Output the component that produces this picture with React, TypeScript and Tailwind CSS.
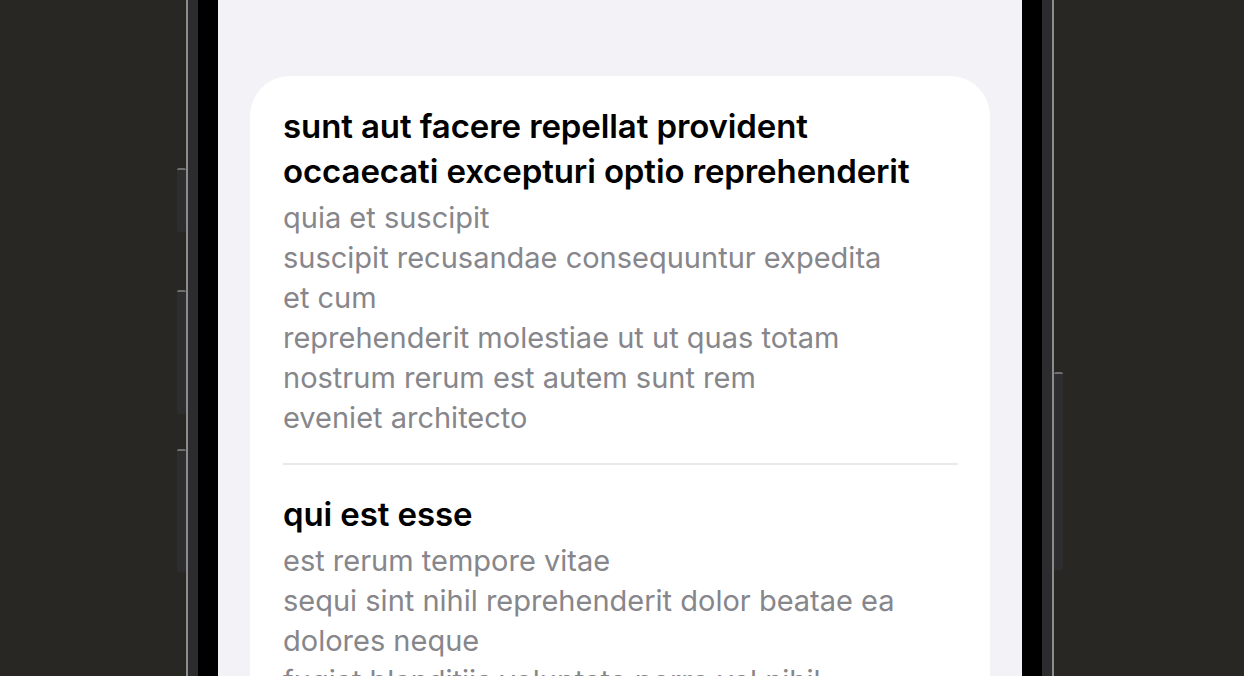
const posts = [
  {
    id: 1,
    title: ["sunt aut facere repellat provident", "occaecati excepturi optio reprehenderit"],
    body: [
      "quia et suscipit",
      "suscipit recusandae consequuntur expedita",
      "et cum",
      "reprehenderit molestiae ut ut quas totam",
      "nostrum rerum est autem sunt rem",
      "eveniet architecto",
    ],
  },
  {
    id: 2,
    title: ["qui est esse"],
    body: [
      "est rerum tempore vitae",
      "sequi sint nihil reprehenderit dolor beatae ea",
      "dolores neque",
      "fugiat blanditiis voluptate porro vel nihil",
      "molestiae ut reiciendis",
    ],
  },
]

function SideButton({ className }: { className: string }) {
  return <div className={"w-[9px] rounded-[2px] border-t-2 border-[#6f6f70] bg-[#2e2e30] " + className} />
}

export default function App() {
  return (
    <div className="flex h-[676px] w-full overflow-hidden bg-[#282723] pl-[177px] font-['Inter','Noto_Sans',sans-serif]">
      {/* left hardware buttons */}
      <div className="flex w-[9px] shrink-0 flex-col pt-[168px]">
        <SideButton className="h-[64px]" />
        <SideButton className="mt-[58px] h-[124px]" />
        <SideButton className="mt-[35px] h-[123px]" />
      </div>

      <div className="flex h-full w-[868px] shrink-0 border-x-2 border-[#8c8c8d]">
        <div className="flex h-full w-full border-x-[10px] border-[#2c2c2e]">
          <div className="flex h-full w-full bg-black px-[20px]">
            <main className="h-full w-full overflow-hidden bg-[#f2f2f7] px-[32px] pt-[76px]">
              <div className="rounded-[40px] bg-white pl-[33px] pr-[32px] pt-[28px]">
                {posts.map((post, i) => (
                  <div key={post.id}>
                    {i > 0 && <div className="mb-[27px] h-[2px] bg-[#e9e9eb]" />}
                    <div className={i === 0 ? "pb-[25px]" : ""}>
                      <h2 className="text-[33px] font-semibold leading-[45px] tracking-[-0.1px] text-black">
                        {post.title.map((line) => (
                          <div key={line}>{line}</div>
                        ))}
                      </h2>
                      <div className="mt-[4px] text-[29px] leading-[40px] text-[#86868b]">
                        {post.body.map((line) => (
                          <div key={line}>{line}</div>
                        ))}
                      </div>
                    </div>
                  </div>
                ))}
              </div>
            </main>
          </div>
        </div>
      </div>

      {/* right hardware button */}
      <div className="flex w-[9px] shrink-0 flex-col pt-[372px]">
        <SideButton className="h-[198px]" />
      </div>
    </div>
  )
}
